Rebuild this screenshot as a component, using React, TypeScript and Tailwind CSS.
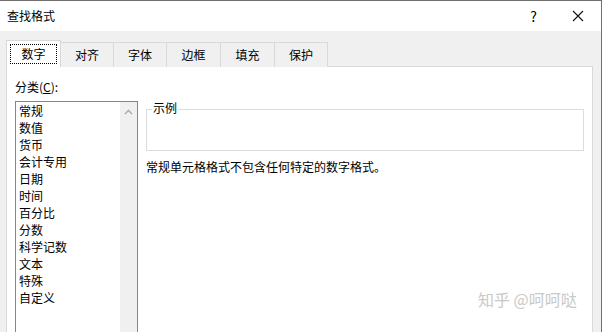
import React from "react";

const font = { fontFamily: '"Noto Sans CJK SC", "Noto Sans", sans-serif' };

const items = ["常规", "数值", "货币", "会计专用", "日期", "时间", "百分比", "分数", "科学记数", "文本", "特殊", "自定义"];
const tabs = [
  { t: "对齐", w: "w-[53px]" },
  { t: "字体", w: "w-[53px]" },
  { t: "边框", w: "w-[54px]" },
  { t: "填充", w: "w-[54px]" },
  { t: "保护", w: "w-[53px]" },
];

export default function App() {
  return (
    <div
      className="relative w-[602px] h-[332px] overflow-hidden bg-[#f0f0f0] border-t border-r border-[#707070] text-[12px] text-[#000] flex flex-col"
      style={font}
    >
      {/* Title bar */}
      <div className="h-[30px] bg-white flex items-center shrink-0">
        <span className="ml-[7px] leading-none">查找格式</span>
        <span className="ml-auto mr-[35px] text-[14px] leading-none">?</span>
        <svg width="12" height="12" viewBox="0 0 12 12" className="mr-[17px]">
          <path d="M1 1 L11 11 M11 1 L1 11" stroke="#111" strokeWidth="1.1" />
        </svg>
      </div>

      {/* Body */}
      <div className="flex-1 pt-[9px] pl-[6px] pr-[8px] flex flex-col">
        {/* Tabs */}
        <div className="flex items-end h-[27px] relative z-10 -mb-px">
          <div className="w-[55px] h-[27px] bg-white border border-b-0 border-[#d9d9d9] flex items-center justify-center">
            <div className="border border-dotted border-black w-[47px] h-[20px] flex items-center justify-center leading-none">
              数字
            </div>
          </div>
          {tabs.map(({ t, w }) => (
            <div
              key={t}
              className={`${w} h-[25px] bg-[#f0f0f0] border border-l-0 border-b-0 border-[#d9d9d9] flex items-center justify-center leading-none`}
            >
              {t}
            </div>
          ))}
        </div>

        {/* Panel */}
        <div className="flex-1 bg-white border border-[#d9d9d9] pl-[8px] pr-[8px] pt-[14px] flex flex-col">
          <div className="leading-none h-[12px] mb-[8px]">分类(<span className="underline">C</span>):</div>
          <div className="flex flex-1">
            <div className="w-[123px] border border-[#828790] flex h-[260px] shrink-0">
              <div className="flex-1 pl-[3px]">
                {items.map((it) => (
                  <div key={it} className="h-[17px] flex items-center leading-none">
                    {it}
                  </div>
                ))}
              </div>
              <div className="w-[17px] bg-[#f0f0f0] flex justify-center pt-[7px]">
                <svg width="9" height="6" viewBox="0 0 9 6">
                  <path d="M1 5 L4.5 1.5 L8 5" stroke="#a6a6a6" strokeWidth="1.3" fill="none" />
                </svg>
              </div>
            </div>
            <div className="ml-[8px] flex-1 flex flex-col">
              <div className="relative mt-[8px] h-[42px] border border-[#dcdcdc]">
                <span className="absolute -top-[8px] left-[5px] bg-white px-[1px] leading-none">示例</span>
              </div>
              <div className="mt-[10px] leading-none">常规单元格格式不包含任何特定的数字格式。</div>
            </div>
          </div>
        </div>
      </div>

      <div className="absolute left-[478px] top-[290px] text-[16px] leading-none text-[#c9c9c9]">知乎 @呵呵哒</div>
    </div>
  );
}
